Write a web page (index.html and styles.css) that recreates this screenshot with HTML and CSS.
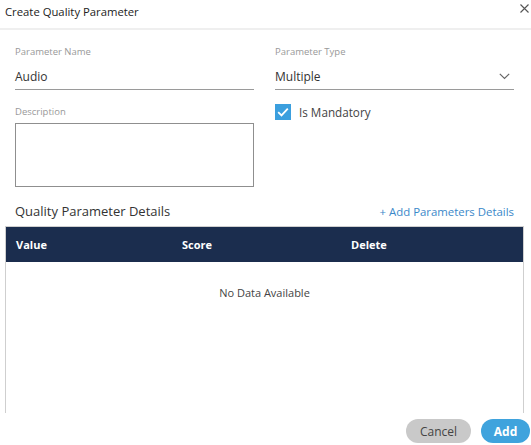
FILE: index.html
```html
<!DOCTYPE html>
<html lang="en">
<head>
<meta charset="utf-8">
<title>Create Quality Parameter</title>
<link rel="stylesheet" href="styles.css">
</head>
<body>
<div class="modal">
  <header class="modal-header">
    <h1 class="modal-title">Create Quality Parameter</h1>
    <button class="close-btn" aria-label="Close">
      <svg width="9" height="9" viewBox="0 0 9 9"><path d="M0.5 0.5 L8.5 8.5 M8.5 0.5 L0.5 8.5" stroke="#555" stroke-width="1.1" fill="none"/></svg>
    </button>
  </header>

  <div class="form-grid">
    <div class="col">
      <label class="field-label">Parameter Name</label>
      <div class="input">Audio</div>
      <label class="field-label desc-label">Description</label>
      <div class="textarea"></div>
    </div>
    <div class="col">
      <label class="field-label">Parameter Type</label>
      <div class="input select">
        <span>Multiple</span>
        <svg width="11" height="7" viewBox="0 0 11 7"><path d="M0.8 0.8 L5.5 5.5 L10.2 0.8" stroke="#666" stroke-width="1.2" fill="none"/></svg>
      </div>
      <div class="checkbox-row">
        <span class="checkbox">
          <svg width="16" height="16" viewBox="0 0 16 16"><path d="M3.2 8.2 L6.5 11.4 L12.8 4.6" stroke="#fff" stroke-width="1.8" fill="none"/></svg>
        </span>
        <span class="checkbox-label">Is Mandatory</span>
      </div>
    </div>
  </div>

  <div class="details-head">
    <h2 class="details-title">Quality Parameter Details</h2>
    <a class="add-link">+ Add Parameters Details</a>
  </div>

  <div class="table">
    <div class="table-head">
      <span>Value</span>
      <span>Score</span>
      <span>Delete</span>
    </div>
    <div class="table-body">
      <p class="empty">No Data Available</p>
    </div>
  </div>

  <footer class="modal-footer">
    <button class="btn btn-cancel">Cancel</button>
    <button class="btn btn-add">Add</button>
  </footer>
</div>
</body>
</html>
```

FILE: styles.css
```css
* { box-sizing: border-box; }

html, body {
  margin: 0;
  padding: 0;
  background: #fff;
}

body {
  font-family: "Open Sans", "Noto Sans", sans-serif;
  color: #333;
  width: 531px;
  height: 445px;
  overflow: hidden;
}

.modal {
  display: flex;
  flex-direction: column;
}

.modal-header {
  height: 30px;
  border-bottom: 2px solid #efefef;
  display: flex;
  align-items: flex-start;
  justify-content: space-between;
  padding: 0 2px 0 5px;
}

.modal-title {
  margin: 0;
  font-size: 11.3px;
  font-weight: 400;
  line-height: 14px;
  padding-top: 5px;
  color: #222;
}

.close-btn {
  border: 0;
  background: none;
  padding: 0;
  margin-top: 4px;
  width: 9px;
  height: 9px;
  display: flex;
}

.form-grid {
  display: grid;
  grid-template-columns: 239px 239px;
  column-gap: 21px;
  padding: 15px 17px 0 15px;
}

.col {
  display: flex;
  flex-direction: column;
}

.field-label {
  font-size: 9.5px;
  line-height: 14px;
  color: #999;
}

.input {
  margin-top: 3px;
  height: 28px;
  border-bottom: 1px solid #9a9a9a;
  font-size: 12px;
  line-height: 18px;
  padding-top: 6px;
  color: #333;
}

.select {
  display: flex;
  justify-content: space-between;
  align-items: flex-start;
  padding-right: 4px;
}

.select svg {
  margin-top: 5px;
}

.desc-label {
  margin-top: 15px;
}

.textarea {
  margin-top: 4px;
  height: 64px;
  border: 1px solid #8f8f8f;
}

.checkbox-row {
  margin-top: 14px;
  display: flex;
  align-items: center;
  gap: 8px;
}

.checkbox {
  width: 16px;
  height: 16px;
  background: #3b9fde;
  display: flex;
}

.checkbox-label {
  font-size: 11.7px;
  line-height: 16px;
  color: #444;
}

.details-head {
  display: flex;
  justify-content: space-between;
  align-items: baseline;
  padding: 0 17px 0 15px;
  margin-top: 15px;
  height: 24px;
}

.details-title {
  margin: 0;
  font-size: 13px;
  font-weight: 400;
  line-height: 18px;
  color: #333;
}

.add-link {
  font-size: 11.4px;
  color: #3a88c9;
  line-height: 18px;
}

.table {
  margin: 0 7px 0 5px;
  border: 1px solid #cfcfcf;
  border-bottom: 0;
}

.table-head {
  background: #1b2d4e;
  height: 35px;
  display: grid;
  grid-template-columns: 166px 169px 1fr;
  align-items: center;
  padding-left: 10px;
  color: #fff;
  font-size: 11px;
  font-weight: 700;
}

.table-body {
  height: 151px;
}

.empty {
  margin: 0;
  padding-top: 23px;
  text-align: center;
  font-size: 11px;
  line-height: 16px;
  color: #444;
}

.modal-footer {
  display: flex;
  justify-content: flex-end;
  gap: 10px;
  padding: 6px 1px 0 0;
}

.btn {
  border: 0;
  height: 24px;
  border-radius: 12px;
  font-family: inherit;
  font-size: 12px;
  padding: 0;
}

.btn-cancel {
  width: 65px;
  background: #c9c9c9;
  color: #444;
}

.btn-add {
  width: 49px;
  background: #3fa3dd;
  color: #fff;
  font-weight: 700;
}
```
